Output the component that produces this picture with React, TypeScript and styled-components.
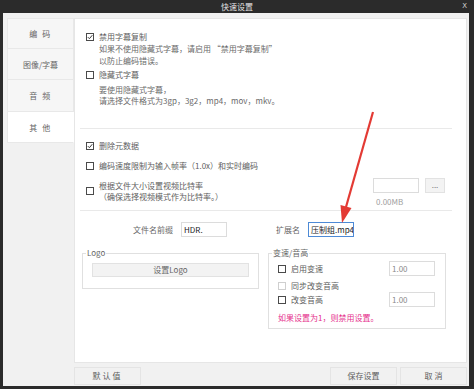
import React from "react";
import styled, { createGlobalStyle, css } from "styled-components";

const Global = createGlobalStyle`
  html, body { margin: 0; padding: 0; background: #2b2b2b; }
  * { box-sizing: border-box; }
  body { font-family: "Noto Sans CJK SC", "Noto Sans", sans-serif; }
`;

const Window = styled.div`
  position: relative;
  width: 474px;
  height: 389px;
  background: #2b2b2b;
  display: flex;
  flex-direction: column;
  overflow: hidden;
`;

const TitleBar = styled.div`
  height: 13px;
  display: flex;
  align-items: center;
  justify-content: center;
  position: relative;
  color: #e4e4e4;
  font-size: 8px;
  line-height: 13px;
`;

const CloseX = styled.span`
  position: absolute;
  right: 7px;
  top: 0;
  font-family: "DejaVu Sans", sans-serif;
  font-size: 7px;
  line-height: 13px;
  color: #cfcfcf;
`;

const Body = styled.div`
  margin: 0 5px 3px 3px;
  height: 373px;
  background: #f1f1f1;
  display: flex;
  padding: 5px 2px 1px 4px;
`;

const Tabs = styled.div`
  width: 67px;
  display: flex;
  flex-direction: column;
`;

const Tab = styled.div<{ $active?: boolean; $h: number; $spaced?: boolean }>`
  height: ${(p) => p.$h}px;
  display: flex;
  align-items: center;
  justify-content: center;
  font-size: 8px;
  color: #666;
  white-space: pre;
  letter-spacing: ${(p) => (p.$spaced ? "1.5px" : "0")};
  border: 1px solid #e8e8e8;
  border-top: none;
  background: ${(p) => (p.$active ? "#ffffff" : "#f6f6f6")};
  ${(p) =>
    p.$active &&
    css`
      border-right-color: #ffffff;
    `}
  &:first-child { border-top: 1px solid #e8e8e8; }
`;

const MainCol = styled.div`
  flex: 1;
  display: flex;
  flex-direction: column;
`;

const Panel = styled.div`
  height: 345px;
  background: #ffffff;
  border: 1px solid #e6e6e6;
  padding: 12px 14px 0 5px;
  display: flex;
  flex-direction: column;
  color: #606060;
  font-size: 8px;
`;

const Section = styled.div<{ $pt?: number; $pb?: number }>`
  padding: ${(p) => p.$pt ?? 0}px 6px ${(p) => p.$pb ?? 0}px;
  display: flex;
  flex-direction: column;
`;

const Divider = styled.div`
  height: 1px;
  background: #e9e9e9;
`;

const CheckRow = styled.div<{ $mt?: number }>`
  display: flex;
  align-items: center;
  gap: 5px;
  height: 12px;
  line-height: 12px;
  margin-top: ${(p) => p.$mt ?? 0}px;
  white-space: nowrap;
`;

const Box = styled.span<{ $disabled?: boolean }>`
  width: 8px;
  height: 8px;
  flex: none;
  border: 1px solid ${(p) => (p.$disabled ? "#cfcfcf" : "#4a4a4a")};
  background: #fff;
  display: inline-flex;
  align-items: center;
  justify-content: center;
`;

const Check = ({ checked, disabled }: { checked?: boolean; disabled?: boolean }) => (
  <Box $disabled={disabled}>
    {checked && (
      <svg width="6" height="6" viewBox="0 0 6 6">
        <path d="M0.8 3.1 L2.4 4.7 L5.3 1.2" fill="none" stroke="#3a3a3a" strokeWidth="1" />
      </svg>
    )}
  </Box>
);

const SubText = styled.div<{ $lh?: number; $mt?: number }>`
  margin-left: 13px;
  margin-top: ${(p) => p.$mt ?? 0}px;
  line-height: ${(p) => p.$lh ?? 12}px;
  white-space: nowrap;
  color: #6a6a6a;
`;

const BitrateRow = styled.div`
  display: flex;
  align-items: flex-start;
  justify-content: space-between;
  margin-top: 8px;
`;

const BitrateLeft = styled.div`
  display: flex;
  align-items: center;
  gap: 5px;
  line-height: 11px;
  white-space: nowrap;
`;

const BitrateRight = styled.div`
  margin-top: -2px;
  margin-right: 1px;
  display: flex;
  flex-direction: column;
`;

const InputLine = styled.div`
  display: flex;
  gap: 6px;
`;

const TextBox = styled.div<{ $focus?: boolean; $dark?: boolean; $w?: number }>`
  width: ${(p) => p.$w ?? 46}px;
  height: 15px;
  flex: none;
  border: 1px solid ${(p) => (p.$focus ? "#4d8ad6" : "#dcdcdc")};
  background: #fff;
  padding-left: 2px;
  font-size: 8px;
  line-height: 13px;
  color: ${(p) => (p.$dark ? "#222" : "#8a8a8a")};
  white-space: nowrap;
  overflow: hidden;
`;

const SmallBtn = styled.div`
  width: 20px;
  height: 15px;
  background: #f3f3f3;
  border: 1px solid #e2e2e2;
  font-size: 8px;
  line-height: 11px;
  text-align: center;
  color: #777;
`;

const SizeText = styled.div`
  margin-top: 3px;
  margin-left: 3px;
  line-height: 11px;
  color: #a0a0a0;
`;

const FieldRow = styled.div`
  display: flex;
  align-items: center;
  margin-top: 11px;
  padding-left: 53px;
  white-space: nowrap;
`;

const FieldLabel = styled.span<{ $ml?: number }>`
  margin-left: ${(p) => p.$ml ?? 0}px;
  margin-right: 8px;
  color: #666;
`;

const Groups = styled.div`
  display: flex;
  gap: 9px;
  padding-left: 2px;
  margin-top: 10px;
`;

const Group = styled.fieldset<{ $w: number }>`
  width: ${(p) => p.$w}px;
  margin: 0;
  border: 1px solid #e0e0e0;
  padding: 0 9px;
  min-width: 0;
  align-self: flex-start;
  display: flex;
  flex-direction: column;
`;

const Legend = styled.legend`
  padding: 0 1px;
  margin-left: -6px;
  font-size: 8px;
  line-height: 12px;
  color: #666;
`;

const WideBtn = styled.div`
  height: 14px;
  margin: 4px 0 11px;
  background: #f3f3f3;
  border: 1px solid #e2e2e2;
  text-align: center;
  line-height: 12px;
  color: #666;
`;

const TempoRow = styled.div<{ $mt?: number; $h?: number }>`
  display: flex;
  align-items: center;
  justify-content: space-between;
  padding-right: 1px;
  height: ${(p) => p.$h ?? 15}px;
  margin-top: ${(p) => p.$mt ?? 0}px;
`;

const Note = styled.div`
  margin-top: 5px;
  margin-bottom: 4px;
  line-height: 12px;
  color: #e5308c;
  white-space: nowrap;
`;

const ButtonBar = styled.div`
  margin-top: 4px;
  height: 18px;
  display: flex;
  gap: 3px;
`;

const Btn = styled.div<{ $spaced?: boolean }>`
  width: 67px;
  height: 18px;
  background: #f1f1f1;
  border: 1px solid #e4e4e4;
  text-align: center;
  font-size: 8px;
  line-height: 16px;
  color: #5e5e5e;
  white-space: pre;
  letter-spacing: ${(p) => (p.$spaced ? "2px" : "0")};
  &:first-child { margin-right: auto; }
`;

const Arrow = styled.svg`
  position: absolute;
  left: 0;
  top: 0;
  pointer-events: none;
`;

export default function App() {
  return (
    <>
      <Global />
      <Window>
        <TitleBar>
          快速设置
          <CloseX>X</CloseX>
        </TitleBar>
        <Body>
          <Tabs>
            <Tab $h={31} $spaced>编 码</Tab>
            <Tab $h={31}>图像/字幕</Tab>
            <Tab $h={32} $spaced>音 频</Tab>
            <Tab $h={31} $spaced $active>
              其 他
            </Tab>
          </Tabs>
          <MainCol>
            <Panel>
              <Section $pt={0} $pb={22}>
                <CheckRow>
                  <Check checked />
                  禁用字幕复制
                </CheckRow>
                <SubText>如果不使用隐藏式字幕，请启用 “禁用字幕复制”</SubText>
                <SubText>以防止编码错误。</SubText>
                <CheckRow $mt={2}>
                  <Check />
                  隐藏式字幕
                </CheckRow>
                <SubText $lh={11} $mt={3}>
                  要使用隐藏式字幕，
                </SubText>
                <SubText $lh={11}>请选择文件格式为3gp，3g2，mp4，mov，mkv。</SubText>
              </Section>
              <Divider />
              <Section $pb={3}>
                <CheckRow $mt={11}>
                  <Check checked />
                  删除元数据
                </CheckRow>
                <CheckRow $mt={8}>
                  <Check />
                  编码速度限制为输入帧率（1.0x）和实时编码
                </CheckRow>
                <BitrateRow>
                  <BitrateLeft>
                    <Check />
                    <div>
                      <div>根据文件大小设置视频比特率</div>
                      <div>（确保选择视频模式作为比特率。）</div>
                    </div>
                  </BitrateLeft>
                  <BitrateRight>
                    <InputLine>
                      <TextBox />
                      <SmallBtn>...</SmallBtn>
                    </InputLine>
                    <SizeText>0.00MB</SizeText>
                  </BitrateRight>
                </BitrateRow>
              </Section>
              <Divider />
              <FieldRow>
                <FieldLabel>文件名前缀</FieldLabel>
                <TextBox $dark>HDR.</TextBox>
                <FieldLabel $ml={49}>扩展名</FieldLabel>
                <TextBox $dark $focus>
                  压制组.mp4
                </TextBox>
              </FieldRow>
              <Groups>
                <Group $w={177}>
                  <Legend>Logo</Legend>
                  <WideBtn>设置Logo</WideBtn>
                </Group>
                <Group $w={178}>
                  <Legend>变速/音高</Legend>
                  <TempoRow $mt={2}>
                    <CheckRow>
                      <Check />
                      启用变速
                    </CheckRow>
                    <TextBox>1.00</TextBox>
                  </TempoRow>
                  <TempoRow $mt={4} $h={12}>
                    <CheckRow>
                      <Check disabled />
                      同步改变音高
                    </CheckRow>
                  </TempoRow>
                  <TempoRow>
                    <CheckRow>
                      <Check />
                      改变音高
                    </CheckRow>
                    <TextBox>1.00</TextBox>
                  </TempoRow>
                  <Note>如果设置为1，则禁用设置。</Note>
                </Group>
              </Groups>
            </Panel>
            <ButtonBar>
              <Btn $spaced>默认值</Btn>
              <Btn>保存设置</Btn>
              <Btn>取 消</Btn>
            </ButtonBar>
          </MainCol>
        </Body>
        <Arrow width="474" height="389" viewBox="0 0 474 389">
          <line x1="373" y1="112" x2="346" y2="207" stroke="#e33a34" strokeWidth="2.2" />
          <polygon points="342,223 351.5,208 340.5,205" fill="#e33a34" />
        </Arrow>
      </Window>
    </>
  );
}
